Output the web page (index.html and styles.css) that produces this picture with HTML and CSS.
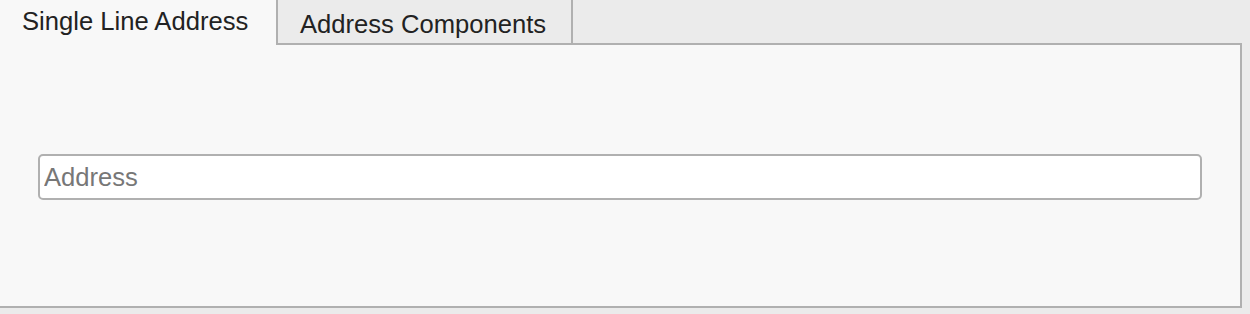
FILE: index.html
```html
<!DOCTYPE html>
<html lang="en">
<head>
  <meta charset="UTF-8">
  <title>Address Search</title>
  <link rel="stylesheet" href="styles.css">
</head>
<body>

<div class="tabs">
  <div class="tab-bar">
    <button class="tab active">Single Line Address</button>
    <button class="tab">Address Components</button>
  </div>
  <div class="tab-panel">
    <input type="text" class="address-input" placeholder="Address">
  </div>
</div>

</body>
</html>
```

FILE: styles.css
```css
body { margin: 0; background: #ebebeb; font-family: "Liberation Sans", Arial, sans-serif; }
.tabs { width: 1242px; }
.tab-bar { display: flex; height: 43px; }
.tab { box-sizing: border-box; width: 297px; font-family: inherit; font-size: 25.6px; color: #222; text-align: left; padding: 3px 0 0 22px; border: 2px solid #b0b0b0; border-top: none; border-bottom: none; background: #ebebeb; height: 43px; line-height: 43px; margin: 0; }
.tab.active { width: 276px; background: #f8f8f8; border: none; height: 45px; position: relative; z-index: 1; padding: 0 0 2px 22px; }
.tab-panel { background: #f8f8f8; border: 2px solid #b0b0b0; border-left: none; padding: 109px 38px 106px 38px; }
.address-input { display: block; box-sizing: border-box; width: 100%; height: 46px; border: 2px solid #b0b0b0; border-radius: 5px; background: #fff; font-family: inherit; font-size: 25.6px; color: #222; padding: 0 4px; margin: 0; }
.address-input::placeholder { color: #777; }
```
